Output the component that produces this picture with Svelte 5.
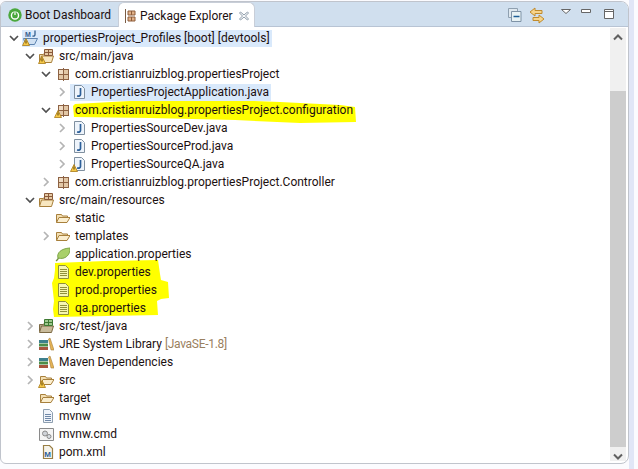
<script>
  // flat view of the tree: depth, arrow (open / closed / none), icon, label
  const rows = [
    { d: 0, arrow: 'open', icon: 'project', warn: true, text: 'propertiesProject_Profiles [boot] [devtools]', sel: true },
    { d: 1, arrow: 'open', icon: 'srcfolder', warn: true, text: 'src/main/java' },
    { d: 2, arrow: 'open', icon: 'pkg', text: 'com.cristianruizblog.propertiesProject' },
    { d: 3, arrow: 'closed', icon: 'java', text: 'PropertiesProjectApplication.java', sel: true },
    { d: 2, arrow: 'open', icon: 'pkg', warn: true, text: 'com.cristianruizblog.propertiesProject.configuration' },
    { d: 3, arrow: 'closed', icon: 'java', text: 'PropertiesSourceDev.java' },
    { d: 3, arrow: 'closed', icon: 'java', text: 'PropertiesSourceProd.java' },
    { d: 3, arrow: 'closed', icon: 'java', warn: true, text: 'PropertiesSourceQA.java' },
    { d: 2, arrow: 'closed', icon: 'pkg', text: 'com.cristianruizblog.propertiesProject.Controller' },
    { d: 1, arrow: 'open', icon: 'srcfolder', text: 'src/main/resources' },
    { d: 2, icon: 'folder', text: 'static' },
    { d: 2, arrow: 'closed', icon: 'folder', text: 'templates' },
    { d: 2, icon: 'leaf', text: 'application.properties' },
    { d: 2, icon: 'props', text: 'dev.properties' },
    { d: 2, icon: 'props', text: 'prod.properties' },
    { d: 2, icon: 'props', text: 'qa.properties' },
    { d: 1, arrow: 'closed', icon: 'srcfolder', text: 'src/test/java', dark: true },
    { d: 1, arrow: 'closed', icon: 'lib', text: 'JRE System Library', note: '[JavaSE-1.8]' },
    { d: 1, arrow: 'closed', icon: 'lib', text: 'Maven Dependencies' },
    { d: 1, arrow: 'closed', icon: 'folder', warn: true, text: 'src' },
    { d: 1, icon: 'folder', text: 'target' },
    { d: 1, icon: 'file', text: 'mvnw' },
    { d: 1, icon: 'cmd', text: 'mvnw.cmd' },
    { d: 1, icon: 'pom', text: 'pom.xml' }
  ];
</script>

{#snippet icon(kind, warn, dark)}
  <svg class="ico" width="16" height="16" viewBox="0 0 16 16">
    {#if kind === 'project'}
      <text x="3" y="6.500" class="mj">M</text>
      <path d="M13 .5v4q0 2-2.500 1.500" fill="none" stroke="#35608f" stroke-width="1.300" />
      <path d="M1.500 8.500h14l-3 6h-9z" fill="#cfe0f2" stroke="#5d84b0" />
    {:else if kind === 'srcfolder'}
      <path d="M1.500 13.500v-7h4l1-1.500h7v2" fill={dark ? '#b7a98a' : '#f3dfb3'} stroke={dark ? '#7d6a45' : '#a8803c'} />
      <path d="M1.500 14.500l2-6.500h12l-2 6.500z" fill={dark ? '#c9bb9b' : '#f8e7c0'} stroke={dark ? '#7d6a45' : '#a8803c'} />
      <path d="M6.500 1.500h8v6h-8zM10.500 1.500v6M6.500 4.500h8" fill={dark ? '#9fc98f' : '#e4c9a4'} stroke={dark ? '#3f7a33' : '#8a5a3a'} />
    {:else if kind === 'pkg'}
      <path d="M4 3h11v11h-11z" fill="#e2c7a6" />
      <path d="M4 8.500h11M9.500 2v13M4.500 3v11M14.500 3v11M4 3.500h11M4 13.500h11" fill="none" stroke="#8d6243" />
      <path d="M5 4h4v4h-4z" fill="#f0dcc4" />
    {:else if kind === 'java'}
      <path d="M4.500 1.500h7l3 3v10h-10z" fill="#eef4fb" stroke="#7f8f9f" />
      <path d="M10.500 4v6.500q0 2-3.500 1.500" fill="none" stroke="#2c5f99" stroke-width="1.700" />
    {:else if kind === 'folder'}
      <path d="M2.500 12.500v-8h5l1 1.500h5v2" fill="#f3dfb3" stroke="#a8803c" />
      <path d="M2.500 12.500l2.500-5h11l-3 5z" fill="#fbeecf" stroke="#a8803c" />
    {:else if kind === 'leaf'}
      <path d="M2 15q1.500-1 2.500-3" fill="none" stroke="#6f8f3a" stroke-width="1.400" />
      <path d="M4 12C2.500 7 7 2.500 16 2c.5 7-5 12-12 10z" fill="#a9d06a" stroke="#7fa548" />
    {:else if kind === 'props'}
      <path d="M4.500 1.500h7l3 3v10h-10z" fill="#f6f6b0" stroke="#8f8f3c" />
      <path d="M6 5.500h7M6 7.500h7M6 9.500h7M6 11.500h7" stroke="#8f8f3c" />
    {:else if kind === 'lib'}
      <path d="M1 4h9v3h-9z" fill="#3e7f8c" />
      <path d="M1 7.500h9v3h-9z" fill="#4d8d48" />
      <path d="M1 11h9v3h-9z" fill="#a8553e" />
      <path d="M10.500 3l1.500-1 4 12h-3z" fill="#e6b455" stroke="#a8803c" stroke-width=".6" />
    {:else if kind === 'file'}
      <path d="M5.500 1.500h6l3 3v10h-9z" fill="#f0f4fa" stroke="#8e9fb0" />
      <path d="M7 6.500h6M7 8.500h6M7 10.500h6M7 12.500h6" stroke="#6f88a8" />
    {:else if kind === 'cmd'}
      <path d="M1.500 2.500h14v12h-14z" fill="#f4f4f4" stroke="#8a8a8a" />
      <circle cx="7" cy="7.500" r="2.500" fill="#cfd3d8" stroke="#8a8a8a" />
      <circle cx="11" cy="10.500" r="2" fill="#d8dde2" stroke="#8a8a8a" />
    {:else if kind === 'pom'}
      <path d="M5.500 1.500h6l3 3v10h-9z" fill="#f6f3ea" stroke="#9a7f45" stroke-width="1.200" />
      <text x="6.300" y="12.500" class="pom">M</text>
    {/if}
    {#if warn}
      <path d="M4 8.500l3.500 7h-7z" fill="#f6c948" stroke="#a87a18" stroke-width=".8" />
      <path d="M4 10.500v3" stroke="#5b4208" />
    {/if}
  </svg>
{/snippet}

<div class="page">
  <div class="view">
    <div class="header">
      <div class="tab">
        <svg width="14" height="14" viewBox="0 0 15 15">
          <circle cx="7.500" cy="7.500" r="7.200" fill="#4aa83c" />
          <circle cx="7.500" cy="8" r="3.800" fill="none" stroke="#fff" stroke-width="1.500" />
          <path d="M7.500 2.500v5" stroke="#4aa83c" stroke-width="3" />
          <path d="M7.500 3.500v4" stroke="#fff" stroke-width="1.300" />
        </svg>
        <span>Boot Dashboard</span>
      </div>
      <div class="tab active">
        <svg width="12" height="14" viewBox="0 0 12 14">
          <path d="M1.500 0v14" stroke="#7a5c44" />
          <path d="M4 2h7v4h-7zM4 8h7v4h-7zM7.500 2v4M7.500 8v4" fill="#e0b088" stroke="#8d5c3a" />
        </svg>
        <span>Package Explorer</span>
        <svg class="close" width="10" height="10" viewBox="0 0 10 10">
          <path d="M1.500 1l3.500 3 3.500-3 1 1-3 3 3 3-1 1-3.500-3-3.500 3-1-1 3-3-3-3z" fill="#fff" stroke="#8c9aa8" />
        </svg>
      </div>
      <div class="tools">
        <svg class="t-collapse" width="14" height="14" viewBox="0 0 14 14">
          <path d="M.5.500h9v9h-9z" fill="#dfe8ef" stroke="#8fa0b0" />
          <path d="M3.500 3.500h9.500v10h-9.500z" fill="#e8f2f4" stroke="#7f93a6" />
          <path d="M5.500 8.500h6" stroke="#1e5f96" stroke-width="1.500" />
        </svg>
        <svg class="t-link" width="16" height="17" viewBox="0 0 16 17">
          <path d="M6 1L1 5l5 4V6.500h7v-3H6z" fill="#f6d48a" stroke="#c08a2c" />
          <path d="M10 8l5 4-5 4v-2.500H4v-3h6z" fill="#f6d48a" stroke="#c08a2c" />
        </svg>
        <svg class="t-menu" width="10" height="5" viewBox="0 0 10 5">
          <path d="M.5.500h9L5 4.500z" fill="#fff" stroke="#666" />
        </svg>
        <svg class="t-min" width="10" height="4" viewBox="0 0 10 4">
          <path d="M.5.500h9v3h-9z" fill="#fff" stroke="#666" />
        </svg>
        <svg class="t-max" width="10" height="10" viewBox="0 0 10 10">
          <path d="M.5.500h9v9h-9z" fill="#fff" stroke="#666" />
          <path d="M0 2.500h10" stroke="#666" />
        </svg>
      </div>
    </div>

    <div class="body">
      <div class="tree">
        <!-- hand drawn yellow marker from the screenshot, page coordinates -->
        <svg class="marker" width="360" height="320" viewBox="0 0 360 320">
          <path d="M73 106l2-2 55-3 80-2 70 3 60 3 15 2 1 15-56 1-65-3-85-2-76-1z" fill="#ffff00" />
          <path d="M55 263l50-2 53-1 2 14 1 6 7 2 1 16-8 1-4 2 1 14-50 1-54 1-1-8 1-8-1-9-1-9 2-5 1-8z" fill="#ffff00" />
        </svg>
        {#each rows as row}
          <div class="row" style="padding-left: {5 + row.d * 16}px">
            <span class="arrow">
              {#if row.arrow === 'open'}
                <svg width="10" height="7" viewBox="0 0 10 7"><path d="M1 1l4 4 4-4" fill="none" stroke="#505050" stroke-width="1.700" /></svg>
              {:else if row.arrow === 'closed'}
                <svg width="7" height="10" viewBox="0 0 7 10"><path d="M1 1l4 4-4 4" fill="none" stroke="#b4b4b4" stroke-width="1.700" /></svg>
              {/if}
            </span>
            <span class="label" class:sel={row.sel}>
              {@render icon(row.icon, row.warn, row.dark)}
              <span class="text">{row.text}{#if row.note}<span class="note">{row.note}</span>{/if}</span>
            </span>
          </div>
        {/each}
      </div>
      <div class="scrollbar">
        <svg width="10" height="7" viewBox="0 0 10 7"><path d="M1 5.500l4-4 4 4" fill="none" stroke="#606060" stroke-width="2" /></svg>
        <div class="thumb"></div>
        <svg width="10" height="7" viewBox="0 0 10 7"><path d="M1 1.500l4 4 4-4" fill="none" stroke="#606060" stroke-width="2" /></svg>
      </div>
    </div>
  </div>
  <div class="strip"></div>
</div>

<style>
  :global(body) {
    margin: 0;
    background: #fbfbfe;
  }
  .page {
    display: flex;
    height: 469px;
    align-items: flex-start;
  }
  .strip {
    width: 5px;
    height: 100%;
    background: #e1e6f6;
  }
  .view {
    width: 629px;
    height: 463px;
    flex: none;
    margin-top: 1px;
    box-sizing: border-box;
    border: 1px solid #c0c4cc;
    border-radius: 6px 8px 8px 6px;
    background: #fff;
    overflow: hidden;
    display: flex;
    flex-direction: column;
    font: 12px Roboto, sans-serif;
    color: #1c1010;
  }
  .header {
    height: 25px;
    flex: none;
    display: flex;
    background: #d0dfee;
    border-bottom: 1px solid #b8c4d4;
    box-sizing: border-box;
  }
  .tab {
    display: flex;
    flex: none;
    align-items: center;
    gap: 3px;
    padding: 1px 0 0 7px;
    width: 117px;
    box-sizing: border-box;
    white-space: nowrap;
  }
  .active {
    width: 137px;
    gap: 4px;
    height: 25px;
    padding-left: 5px;
    background: #fff;
    border: 1px solid #c8ced8;
    border-bottom: 0;
    border-radius: 6px 6px 0 0;
  }
  .close {
    margin-left: 2px;
  }
  .tools {
    flex: 1;
    display: flex;
    align-items: flex-start;
  }
  .t-collapse { margin: 6px 0 0 253px; }
  .t-link { margin: 5px 0 0 7px; }
  .t-menu { margin: 7px 0 0 16px; }
  .t-min { margin: 7px 0 0 10px; }
  .t-max { margin: 7px 0 0 13px; }
  .body {
    flex: 1;
    display: flex;
    min-height: 0;
  }
  .tree {
    flex: 1;
    position: relative;
    padding-top: 2px;
  }
  .marker {
    position: absolute;
    left: -1px;
    top: -27px;
  }
  .row {
    position: relative;
    height: 18px;
    display: flex;
    align-items: center;
    white-space: nowrap;
  }
  .arrow {
    width: 16px;
    flex: none;
    display: flex;
    justify-content: center;
    align-items: center;
  }
  .label {
    display: flex;
    align-items: center;
    height: 17px;
    padding-right: 2px;
  }
  .sel {
    background: #d9e9fb;
  }
  .ico {
    flex: none;
    margin-right: 5px;
  }
  .note {
    color: #9a8060;
    margin-left: 3px;
    letter-spacing: -.3px;
  }
  .mj {
    font: bold 7px "Liberation Sans", sans-serif;
    fill: #35608f;
  }
  .pom {
    font: bold 8px "Liberation Sans", sans-serif;
    fill: #2c5f99;
  }
  .scrollbar {
    width: 16px;
    flex: none;
    margin: 1px 2px 2px 0;
    background: #f0f0f0;
    display: flex;
    flex-direction: column;
    align-items: center;
    padding: 6px 0 1px;
    box-sizing: border-box;
  }
  .thumb {
    flex: 1;
    align-self: stretch;
    margin: 50px 0 6px;
    background: #cdcdcd;
  }
</style>
